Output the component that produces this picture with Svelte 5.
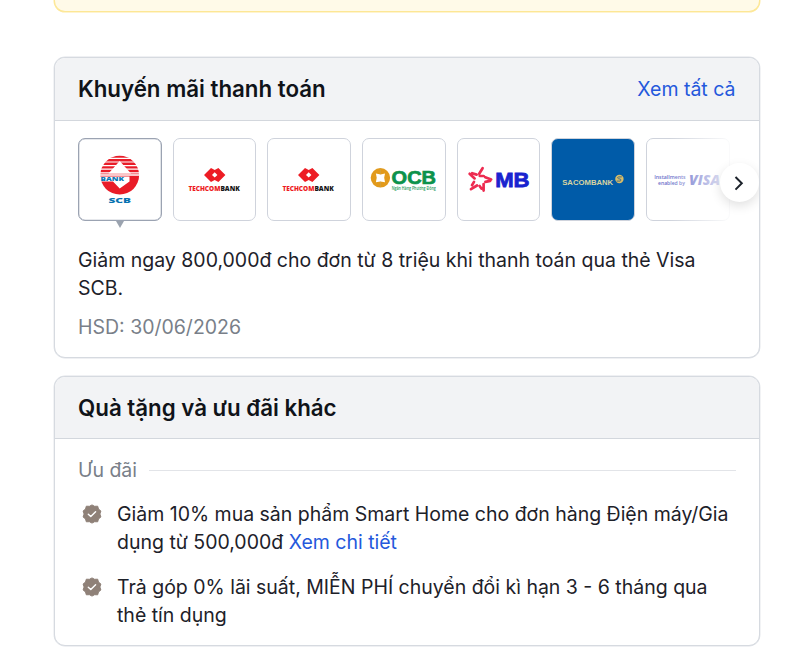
<script>
const banks = [
    { id: 'scb', type: 'scb', name: 'SCB' },
    { id: 'tcb-1', type: 'techcombank', name: 'Techcombank' },
    { id: 'tcb-2', type: 'techcombank', name: 'Techcombank' },
    { id: 'ocb', type: 'ocb', name: 'OCB' },
    { id: 'mb', type: 'mb', name: 'MB' },
    { id: 'sacombank', type: 'sacombank', name: 'Sacombank' },
    { id: 'visa', type: 'visa', name: 'Visa' },
];

let selected = $state('scb');
let track;

function next() {
    track.scrollBy({ left: 190, behavior: 'smooth' });
}
</script>

<div class="page">
    <div class="notice"></div>

    <section class="card payment">
        <header class="card__header">
            <h2 class="card__title">Khuyến mãi thanh toán</h2>
            <a href="#all" class="link">Xem tất cả</a>
        </header>

        <div class="card__body">
            <div class="slider">
                <div class="slider__track" bind:this={track}>
                    {#each banks as bank (bank.id)}
                        <button
                            class="bank bank--{bank.type}"
                            class:active={selected === bank.id}
                            aria-label={bank.name}
                            onclick={() => (selected = bank.id)}
                        >
                            <svg viewBox="0 0 84 84">
                                {#if bank.type === 'scb'}
                                    <clipPath id="scb-top"><rect x="20" y="15" width="44" height="21" /></clipPath>
                                    <circle cx="41.7" cy="37.2" r="19.4" fill="#e91c28" />
                                    <path d="M20 20.4h44M20 24h44M20 27.6h44M20 31.2h44M20 34.8h44" stroke="#fff" stroke-width="1.2" clip-path="url(#scb-top)" />
                                    <path d="M41.7 23L53 35.5H30.5z" fill="#fff" />
                                    <path d="M21 36.2h41v1.6H21z" fill="#fff" />
                                    <path d="M22 38.5h29.5v5L41.7 50.5 35 43.6H22z" fill="#fff" />
                                    <text x="22.5" y="43" textLength="23.5" lengthAdjust="spacingAndGlyphs" font-size="5.6" fill="#0878b5">BANK</text>
                                    <text x="30.4" y="64.5" textLength="22.6" lengthAdjust="spacingAndGlyphs" font-size="7.6" fill="#0873b1">SCB</text>
                                {:else if bank.type === 'techcombank'}
                                    <path d="M38 30l3.7 2 3.7-2 7 6.9-7 7-3.7-2-3.7 2-7-7zM41.7 34.2l-2.7 2.7 2.7 2.7 2.7-2.7z" fill="#ed1c24" fill-rule="evenodd" />
                                    <text x="15.4" y="53.2" textLength="32" lengthAdjust="spacingAndGlyphs" font-size="6.8" fill="#ed1c24">TECHCOM</text>
                                    <text x="47.4" y="53.2" textLength="19.4" lengthAdjust="spacingAndGlyphs" font-size="6.8" fill="#151515">BANK</text>
                                {:else if bank.type === 'ocb'}
                                    <circle cx="18.4" cy="39.8" r="9.7" fill="#e29a1b" />
                                    <path d="M13.9 35.6l4.7 1 4.4-1-.8 4.2.8 4.5-4.5-.9-4.6.9.8-4.5z" fill="#fff" />
                                    <path d="M18.4 30v6.2M18.4 43.7v5.5" stroke="#c9a453" stroke-width=".6" />
                                    <text class="wide" x="29.6" y="46.4" textLength="44.4" lengthAdjust="spacingAndGlyphs" font-size="18.6" fill="#0c924b" stroke="#0c924b" stroke-width=".7">OCB</text>
                                    <text class="thin" x="29.7" y="52.3" textLength="44" lengthAdjust="spacingAndGlyphs" font-size="4.5" fill="#24985a">Ngân Hàng Phương Đông</text>
                                {:else if bank.type === 'mb'}
                                    <g stroke="#ed2b50" stroke-width="2.7" stroke-linecap="round">
                                        <path d="M25.6 30.2l-3.4 5.6M22.7 37.8l4 .2M28.2 39.2l6 2.2M33.2 42.9l-4.8 1M26.6 46v6.6M24.4 50.6l-1.8-2.6M20 47.5l-6 3.7M15 47.2l2-3.3M17.6 40.4l-5-4.6M15.2 35.2l4.4 1.4" />
                                    </g>
                                    <text class="wide" x="38.2" y="48.7" textLength="34.4" lengthAdjust="spacingAndGlyphs" font-size="20.5" fill="#1923cf" stroke="#1923cf" stroke-width=".8">MB</text>
                                {:else if bank.type === 'sacombank'}
                                    <text class="wide" x="11.2" y="47" textLength="51" lengthAdjust="spacingAndGlyphs" font-size="7" fill="#d8d4a2">SACOMBANK</text>
                                    <circle cx="68.4" cy="41" r="4.2" fill="#d9bd67" />
                                    <path d="M70.8 38.9h-3.5q-1.7 1 .2 1.8l2 .5q1.3 1-.4 1.9h-3.5" stroke="#37678a" stroke-width=".9" fill="none" />
                                {:else}
                                    <g fill="#3540b8" opacity=".75">
                                        <text class="thin" x="8.2" y="41.1" textLength="31.5" lengthAdjust="spacingAndGlyphs" font-size="5.8">Installments</text>
                                        <text class="thin" x="12" y="47.2" textLength="27" lengthAdjust="spacingAndGlyphs" font-size="5.8">enabled by</text>
                                        <text class="slant" x="43" y="46.6" textLength="31" lengthAdjust="spacingAndGlyphs" font-size="13.5">VISA</text>
                                    </g>
                                {/if}
                            </svg>
                        </button>
                    {/each}
                </div>
                <div class="slider__fade"></div>
                <button class="slider__next" aria-label="Tiếp theo" onclick={next}>
                    <svg viewBox="0 0 20 20"><path d="M6.5 4l6.3 6.3-6.3 6.3" /></svg>
                </button>
            </div>

            <p class="promo">Giảm ngay 800,000đ cho đơn từ 8 triệu khi thanh toán qua thẻ Visa<br />SCB.</p>
            <p class="expiry">HSD: 30/06/2026</p>
        </div>
    </section>

    <section class="card gifts">
        <header class="card__header">
            <h2 class="card__title">Quà tặng và ưu đãi khác</h2>
        </header>

        <div class="card__body">
            <div class="divider"><span>Ưu đãi</span></div>
            <ul class="offers">
                <li>
                    {@render check()}
                    <p>Giảm 10% mua sản phẩm Smart Home cho đơn hàng Điện máy/Gia<br />dụng từ 500,000đ <a href="#detail" class="link">Xem chi tiết</a></p>
                </li>
                <li>
                    {@render check()}
                    <p>Trả góp 0% lãi suất, MIỄN PHÍ chuyển đổi kì hạn 3 - 6 tháng qua<br />thẻ tín dụng</p>
                </li>
            </ul>
        </div>
    </section>
</div>

{#snippet check()}
    <svg class="check" viewBox="0 0 20 20">
        <path d="M10 .9l2.6 1.4 3.1-.1.8 2.9 2.4 1.9L17.9 10l1 3-2.4 1.9-.8 2.9-3.1-.1L10 19.1l-2.6-1.4-3.1.1-.8-2.9L1.1 13l1-3-1-3 2.4-1.9.8-2.9 3.1.1z" fill="#8f8178" stroke="#8f8178" stroke-linejoin="round" />
        <path d="M6.3 10.2l2.5 2.4 4.8-4.9" fill="none" stroke="#fff" stroke-width="1.4" stroke-linecap="round" stroke-linejoin="round" />
    </svg>
{/snippet}

<style>
:global(body) {
    background: #fff;
    overflow: hidden;
}

.page {
    box-sizing: border-box;
    width: 800px;
    height: 666px;
    padding: 0 40.5px 0 54px;
    font-family: Inter, "Liberation Sans", sans-serif;
    font-size: 19.49px;
    line-height: 28px;
    color: #1d2129;
    overflow: hidden;
}

.notice {
    box-sizing: border-box;
    height: 12px;
    margin-bottom: 45px;
    border: 1px solid #fde795;
    border-top: none;
    border-radius: 0 0 11px 11px;
    background: #fffae8;
    box-shadow: 0 0 0 0.5px #fde9a0;
}

.card {
    box-sizing: border-box;
    border: 1px solid #d6dae0;
    border-radius: 11px;
    overflow: hidden;
    background: #fff;
    box-shadow: 0 0 0 0.4px #dfe2e7;
}

.payment {
    height: 301px;
    margin-bottom: 18px;
}

.gifts {
    height: 270px;
}

.card__header {
    box-sizing: border-box;
    display: flex;
    align-items: center;
    justify-content: space-between;
    height: 63px;
    padding: 0 23px;
    border-bottom: 1px solid #d3d7dd;
    background: #f2f3f5;
}

.gifts .card__header {
    height: 62px;
}

.card__title {
    margin: 0;
    font-size: 22.3px;
    font-weight: 600;
    color: #101319;
}

.link {
    color: #2458dc;
    text-decoration: none;
}

.card__body {
    padding: 17px 23px 0;
}

.slider {
    position: relative;
    height: 92px;
    margin-right: -23px;
}

.slider__track {
    display: flex;
    gap: 11.2px;
    height: 92px;
    overflow: hidden;
    width: 658px;
}

.bank {
    position: relative;
    box-sizing: border-box;
    flex: 0 0 83.5px;
    min-width: 0;
    height: 83px;
    padding: 0;
    border: 1px solid #cfd3dc;
    border-radius: 7px;
    background: #fff;
    cursor: pointer;
}

.bank svg {
    display: block;
    width: 84px;
    height: 84px;
    margin: -1px;
}

.bank text {
    font-family: "Open Sans", "Liberation Sans", sans-serif;
    font-weight: 800;
}

.bank .wide {
    font-family: "Liberation Sans", sans-serif;
    font-weight: 700;
}

.bank .thin {
    font-weight: 600;
}

.bank .slant {
    font-style: italic;
}

.bank--sacombank {
    background: #005ba8;
}

.active {
    border-color: #9ba3b2;
    box-shadow: inset 0 0 0 0.3px #9ba3b2;
}

.active::after {
    content: "";
    position: absolute;
    top: 82px;
    left: 37px;
    border: 4px solid transparent;
    border-top: 7px solid #9ba3af;
    border-bottom: none;
}

.slider__fade {
    position: absolute;
    top: 0;
    right: 0;
    width: 90px;
    height: 90px;
    background: linear-gradient(to right, rgba(255, 255, 255, 0), #fff 75%);
    pointer-events: none;
}

.slider__next {
    position: absolute;
    top: 25px;
    right: 0;
    width: 39px;
    height: 39px;
    padding: 0;
    border: none;
    border-radius: 50%;
    background: #fff;
    box-shadow: 0 4px 11px rgba(0, 0, 0, 0.12);
    cursor: pointer;
}

.slider__next svg {
    display: block;
    width: 20px;
    height: 20px;
    margin: auto;
    fill: none;
    stroke: #1c222b;
    stroke-width: 2;
}

p {
    margin: 0;
    white-space: nowrap;
}

.promo {
    margin-top: 16px;
}

.expiry {
    margin-top: 11px;
    color: #797f89;
}

.divider {
    display: flex;
    align-items: center;
    gap: 12px;
    color: #797f89;
}

.divider::after {
    content: "";
    flex: 1;
    height: 1px;
    background: #e2e4e8;
}

.offers {
    display: grid;
    gap: 16.5px;
    margin: 16px 0 0;
    padding: 0;
    list-style: none;
}

.offers li {
    display: flex;
    gap: 15px;
    padding-left: 4px;
}

.check {
    flex: none;
    width: 20px;
    height: 20px;
    margin-top: 4px;
}
</style>
